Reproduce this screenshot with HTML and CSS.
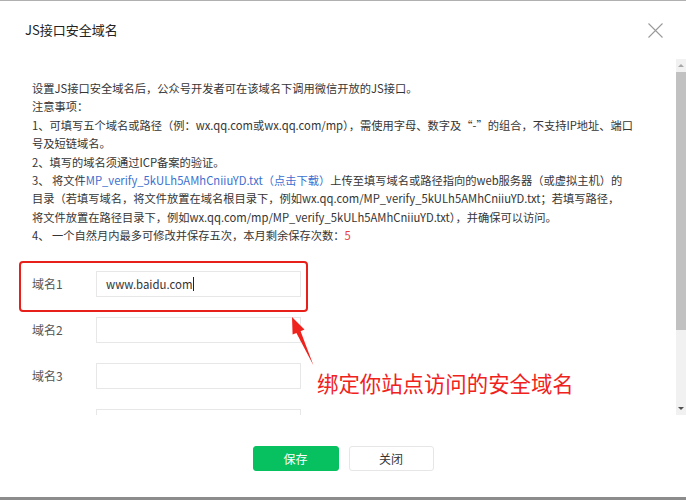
FILE: index.html
```html
<!DOCTYPE html>
<html lang="zh-CN">
<head>
<meta charset="utf-8">
<title>JS接口安全域名</title>
<link rel="stylesheet" href="styles.css">
</head>
<body>
<div class="dialog">
  <div class="topline"></div>
  <div class="header">
    <div class="title">JS接口安全域名</div>
    <svg class="close" width="15" height="15" viewBox="0 0 15 15"><path d="M0.5 0.5L14.5 14.5M14.5 0.5L0.5 14.5" stroke="#9a9a9a" stroke-width="1.1" fill="none"/></svg>
  </div>
  <div class="scroll">
    <div class="content">
      <div class="desc">
        <div>设置JS接口安全域名后，公众号开发者可在该域名下调用微信开放的JS接口。</div>
        <div>注意事项：</div>
        <div>1、可填写五个域名或路径（例：wx.qq.com或wx.qq.com/mp），需使用字母、数字及“-”的组合，不支持IP地址、端口</div>
        <div>号及短链域名。</div>
        <div>2、填写的域名须通过ICP备案的验证。</div>
        <div>3、 将文件<span class="link">MP_verify_5kULh5AMhCniiuYD.txt（点击下载）</span>上传至填写域名或路径指向的web服务器（或虚拟主机）的</div>
        <div>目录（若填写域名，将文件放置在域名根目录下，例如wx.qq.com/MP_verify_5kULh5AMhCniiuYD.txt；若填写路径，</div>
        <div>将文件放置在路径目录下，例如wx.qq.com/mp/MP_verify_5kULh5AMhCniiuYD.txt），并确保可以访问。</div>
        <div>4、 一个自然月内最多可修改并保存五次，本月剩余保存次数：<span class="num">5</span></div>
      </div>
      <div class="form">
        <div class="row"><span class="label">域名1</span><div class="input"><span class="val">www.baidu.com</span><span class="caret"></span></div></div>
        <div class="row"><span class="label">域名2</span><div class="input"></div></div>
        <div class="row"><span class="label">域名3</span><div class="input"></div></div>
        <div class="row"><span class="label"></span><div class="input"></div></div>
      </div>
      <div class="mark-box"></div>
      <svg class="mark-arrow" width="40" height="60" viewBox="280 310 40 60"><polygon points="292,317 304.5,329.5 300.6,331.2 313.5,365.5 296.4,332.9 292.6,334.6" fill="#f0221c"/></svg>
      <div class="mark-text">绑定你站点访问的安全域名</div>
    </div>
    <div class="scrollbar">
      <div class="sb-up"><span class="tri-up"></span></div>
      <div class="sb-thumb"></div>
      <div class="sb-track"></div>
      <div class="sb-down"><span class="tri-down"></span></div>
    </div>
  </div>
  <div class="footer">
    <div class="btn primary">保存</div>
    <div class="btn">关闭</div>
  </div>
  <div class="bottomline"></div>
</div>
</body>
</html>
```
FILE: styles.css
```css
html, body {
  margin: 0;
  padding: 0;
  background: #ffffff;
}
body {
  width: 686px;
  height: 500px;
  overflow: hidden;
  font-family: "Noto Sans CJK SC", "Noto Sans", sans-serif;
  color: #353535;
}
.dialog {
  display: flex;
  flex-direction: column;
  width: 686px;
  height: 500px;
}
.topline {
  height: 1px;
  background: #b0b0b0;
}
.header {
  height: 58px;
  display: flex;
  align-items: flex-start;
  justify-content: space-between;
}
.title {
  margin: 20px 0 0 25px;
  font-size: 13px;
  line-height: 18px;
  color: #222;
}
.close {
  margin: 22px 23px 0 0;
}
.scroll {
  height: 356px;
  display: flex;
}
.content {
  position: relative;
  width: 676px;
  height: 356px;
  overflow: hidden;
  padding: 20px 0 0 32px;
  box-sizing: border-box;
}
.desc {
  font-size: 11.25px;
  line-height: 18.4px;
  white-space: nowrap;
  color: #353535;
}
.link {
  color: #3d6fcf;
}
.num {
  color: #e64340;
}
.form {
  margin-top: 26px;
  display: flex;
  flex-direction: column;
  gap: 20px;
}
.row {
  display: flex;
  align-items: center;
  height: 26px;
}
.label {
  width: 64px;
  font-size: 12px;
  color: #555;
}
.input {
  width: 205px;
  height: 26px;
  box-sizing: border-box;
  border: 1px solid #e7e7e7;
  display: flex;
  align-items: center;
  padding-left: 9px;
  font-size: 11.4px;
  color: #333;
  flex-shrink: 0;
}
.caret {
  width: 1px;
  height: 14px;
  background: #222;
  margin-left: 1px;
}
.mark-box {
  position: absolute;
  left: 19px;
  top: 202px;
  width: 289px;
  height: 51px;
  box-sizing: border-box;
  border: 2px solid #e8201c;
  border-radius: 4px;
}
.mark-arrow {
  position: absolute;
  left: 280px;
  top: 251px;
}
.mark-text {
  position: absolute;
  left: 317px;
  top: 311px;
  font-size: 21.4px;
  line-height: 26px;
  color: #f0221c;
  white-space: nowrap;
}
.scrollbar {
  width: 10px;
  height: 356px;
  background: #f1f1f1;
  display: flex;
  flex-direction: column;
}
.sb-up, .sb-down {
  height: 13px;
  display: flex;
  align-items: center;
  justify-content: center;
}
.tri-up {
  width: 0;
  height: 0;
  border-left: 3px solid transparent;
  border-right: 3px solid transparent;
  border-bottom: 3px solid #a8a8a8;
}
.tri-down {
  width: 0;
  height: 0;
  border-left: 3px solid transparent;
  border-right: 3px solid transparent;
  border-top: 3px solid #505050;
}
.sb-thumb {
  height: 258px;
  background: #c1c1c1;
}
.sb-track {
  flex: 1;
}
.footer {
  height: 82px;
  display: flex;
  justify-content: center;
  align-items: flex-start;
  gap: 10px;
  padding-top: 31px;
  box-sizing: border-box;
}
.btn {
  width: 85px;
  height: 25px;
  box-sizing: border-box;
  border: 1px solid #e6e6e6;
  border-radius: 3px;
  display: flex;
  align-items: center;
  justify-content: center;
  font-size: 12px;
  color: #353535;
  background: #fff;
}
.btn.primary {
  width: 86px;
  background: #07c160;
  border-color: #07c160;
  color: #fff;
}
.bottomline {
  height: 3px;
  background: #8c8c8c;
}
```
